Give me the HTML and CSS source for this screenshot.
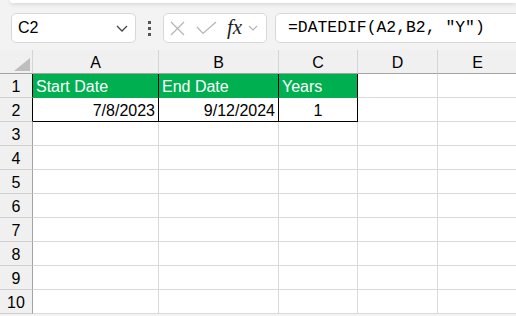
FILE: index.html
```html
<!DOCTYPE html>
<html lang="en">
<head>
    <meta charset="utf-8">
    <title>DATEDIF</title>
    <link rel="stylesheet" href="styles.css">
</head>
<body>
    <div class="ribbon-edge"></div>

    <div class="formula-bar">
        <div class="name-box">
            <span>C2</span>
            <svg class="chev" width="12" height="7" viewBox="0 0 12 7"><path d="M1 1 L6 6 L11 1" fill="none" stroke="#444" stroke-width="1.3"/></svg>
        </div>
        <div class="grip"><i></i><i></i><i></i></div>
        <div class="fn-box">
            <svg width="15" height="15" viewBox="0 0 15 15"><path d="M1 1 L14 14 M14 1 L1 14" stroke="#b4b4b4" stroke-width="1.2"/></svg>
            <svg width="21" height="14" viewBox="0 0 21 14"><path d="M1 6 L7 12.5 L20 1" fill="none" stroke="#b4b4b4" stroke-width="1.2"/></svg>
            <span class="fx">fx</span>
            <svg class="chev-sm" width="10" height="6" viewBox="0 0 10 6"><path d="M1 1 L5 5 L9 1" fill="none" stroke="#b4b4b4" stroke-width="1.2"/></svg>
        </div>
        <div class="formula">=DATEDIF(A2,B2, "Y")</div>
    </div>

    <div class="sheet">
        <div class="corner"><span class="tri"></span></div>
        <div class="colh">A</div>
        <div class="colh">B</div>
        <div class="colh">C</div>
        <div class="colh">D</div>
        <div class="colh">E</div>

        <div class="rowh dark">1</div>
        <div class="cell head edge">Start Date</div>
        <div class="cell head edge">End Date</div>
        <div class="cell head edge">Years</div>
        <div class="cell"></div>
        <div class="cell"></div>

        <div class="rowh dark">2</div>
        <div class="cell num edge low">7/8/2023</div>
        <div class="cell num edge low">9/12/2024</div>
        <div class="cell mid edge low">1</div>
        <div class="cell"></div>
        <div class="cell"></div>

        <div class="rowh">3</div><div class="cell"></div><div class="cell"></div><div class="cell"></div><div class="cell"></div><div class="cell"></div>
        <div class="rowh">4</div><div class="cell"></div><div class="cell"></div><div class="cell"></div><div class="cell"></div><div class="cell"></div>
        <div class="rowh">5</div><div class="cell"></div><div class="cell"></div><div class="cell"></div><div class="cell"></div><div class="cell"></div>
        <div class="rowh">6</div><div class="cell"></div><div class="cell"></div><div class="cell"></div><div class="cell"></div><div class="cell"></div>
        <div class="rowh">7</div><div class="cell"></div><div class="cell"></div><div class="cell"></div><div class="cell"></div><div class="cell"></div>
        <div class="rowh">8</div><div class="cell"></div><div class="cell"></div><div class="cell"></div><div class="cell"></div><div class="cell"></div>
        <div class="rowh">9</div><div class="cell"></div><div class="cell"></div><div class="cell"></div><div class="cell"></div><div class="cell"></div>
        <div class="rowh">10</div><div class="cell"></div><div class="cell"></div><div class="cell"></div><div class="cell"></div><div class="cell"></div>
    </div>
</body>
</html>
```

FILE: styles.css
```css
* {
    margin: 0;
    padding: 0;
    box-sizing: border-box;
}
body {
    width: 516px;
    height: 316px;
    overflow: hidden;
    background: #f3f3f3;
    font-family: "Liberation Sans", Arial, sans-serif;
    color: #000;
}

/* white ribbon edge at the very top */
.ribbon-edge {
    height: 3px;
    margin-left: 10px;
    background: #fff;
    border-bottom-left-radius: 6px;
    box-shadow: 0 1px 4px rgba(0, 0, 0, 0.16);
}

/* formula bar */
.formula-bar {
    display: flex;
    align-items: center;
    height: 30px;
    margin-top: 10px;
    padding-left: 11px;
}
.name-box {
    width: 125px;
    height: 30px;
    background: #fff;
    border: 1px solid #d8d8d8;
    border-radius: 5px;
    display: flex;
    align-items: center;
    justify-content: space-between;
    padding: 0 7px 0 6px;
    font-size: 16px;
}
.chev {
    margin-top: 1px;
}
.grip {
    width: 27px;
    display: flex;
    flex-direction: column;
    align-items: center;
    gap: 3px;
}
.grip i {
    display: block;
    width: 3px;
    height: 3px;
    background: #555;
}
.fn-box {
    width: 104px;
    height: 30px;
    background: #fff;
    border: 1px solid #d8d8d8;
    border-radius: 5px;
    display: flex;
    align-items: center;
    padding-left: 6px;
    gap: 11px;
}
.fx {
    font-family: "Liberation Serif", "Times New Roman", serif;
    font-style: italic;
    font-size: 21px;
    color: #222;
    margin-left: -1px;
    margin-top: -2px;
}
.chev-sm {
    margin-left: -5px;
}
.formula {
    flex: 1;
    height: 30px;
    margin-left: 8px;
    margin-right: -10px;
    background: #fff;
    border: 1px solid #d8d8d8;
    border-radius: 5px;
    padding-left: 12px;
    font-family: "Liberation Mono", "Courier New", monospace;
    font-size: 16.4px;
    line-height: 28px;
    white-space: pre;
}

/* sheet grid */
.sheet {
    margin-top: 7px;
    display: grid;
    grid-template-columns: 33px 126px 120px 79px 80px 80px;
    grid-auto-rows: 24px;
    background: #fff;
}
.corner,
.colh {
    background: #f0f0f0;
    border-bottom: 1px solid #a3a3a3;
}
.corner {
    position: relative;
    border-right: 1px solid #d4d4d4;
}
.tri {
    position: absolute;
    right: 2px;
    bottom: 2px;
    width: 0;
    height: 0;
    border-left: 16px solid transparent;
    border-bottom: 13px solid #bebebe;
}
.colh {
    border-right: 1px solid #d4d4d4;
    text-align: center;
    font-size: 16px;
    line-height: 24px;
    padding-top: 1px;
}
.rowh {
    background: #f0f0f0;
    border-right: 1px solid #a3a3a3;
    border-bottom: 1px solid #cfcfcf;
    text-align: center;
    font-size: 16px;
    line-height: 25px;
}
.rowh.dark {
    border-right-color: #000;
}
.cell {
    border-right: 1px solid #dadada;
    border-bottom: 1px solid #dadada;
    font-size: 16px;
    line-height: 25px;
    padding: 0 3px;
    white-space: nowrap;
    overflow: hidden;
}
.cell.head {
    background: #00b050;
    color: #fff;
    border-bottom-color: #00b050;
}
.cell.edge {
    border-right-color: #000;
}
.cell.low {
    border-bottom-color: #000;
}
.cell.num {
    text-align: right;
}
.cell.mid {
    text-align: center;
}
```
